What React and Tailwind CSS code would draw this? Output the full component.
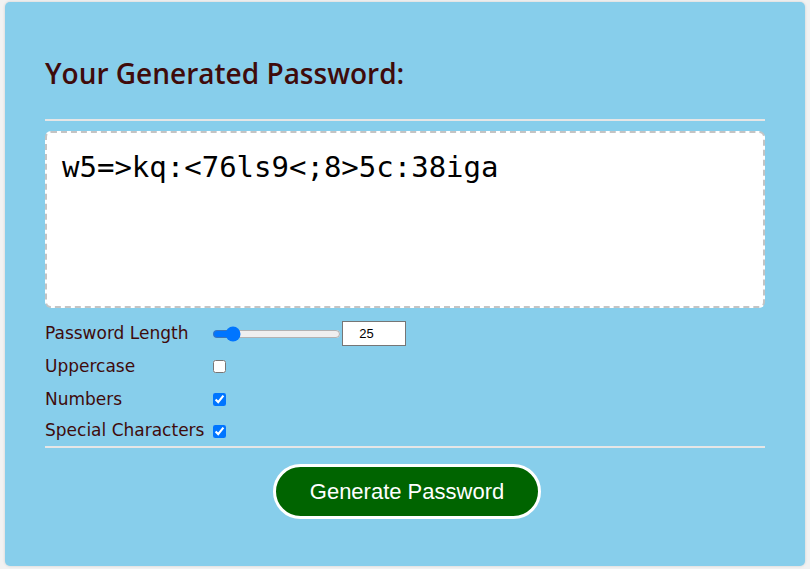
import React from "react";

export default function App() {
  return (
    <div className="min-h-[569px] w-[810px] bg-[#f2f2f2] pt-[2px] pl-[5px]">
      <div className="h-[564px] w-[800px] rounded-[5px] bg-[#87ceeb] px-[40px] shadow-[0_0_3px_rgba(0,0,0,0.15)]">
        <div className="pt-[54px]">
          <h2 className="text-[28px] leading-[34px] font-semibold text-[#3f0b0b] [font-family:'Open_Sans',sans-serif]">
            Your Generated Password:
          </h2>
        </div>
        <div className="mt-[29px] h-[2px] bg-[#e6e6e6]" />
        <div className="mt-[10px] h-[177px] rounded-[6px] border-2 border-dashed border-[#c4c4c4] bg-white px-[15px] pt-[17px]">
          <div className="text-[29px] leading-[34px] text-black [font-family:'DejaVu_Sans_Mono',monospace]">
            w5=&gt;kq:&lt;76ls9&lt;;8&gt;5c:38iga
          </div>
        </div>
        <div className="mt-[9px] text-[17px] text-[#3f0b0b] [font-family:'DejaVu_Sans',sans-serif]">
          <div className="flex h-[33px] items-center">
            <span className="w-[167px]">Password Length</span>
            <input
              type="range"
              min="10"
              max="140"
              defaultValue="25"
              className="m-0 w-[129px] accent-[#0075ff]"
            />
            <input
              type="number"
              defaultValue="25"
              className="ml-[1px] h-[25px] w-[64px] border border-[#767676] bg-white text-center text-[13px] text-black [font-family:'Liberation_Sans',sans-serif]"
            />
          </div>
          <div className="flex h-[33px] items-center">
            <span className="w-[168px]">Uppercase</span>
            <input type="checkbox" className="h-[13px] w-[13px]" />
          </div>
          <div className="flex h-[33px] items-center">
            <span className="w-[168px]">Numbers</span>
            <input type="checkbox" defaultChecked className="h-[13px] w-[13px] accent-[#0075ff]" />
          </div>
          <div className="flex h-[30px] items-center">
            <span className="w-[168px]">Special Characters</span>
            <input type="checkbox" defaultChecked className="h-[13px] w-[13px] accent-[#0075ff]" />
          </div>
        </div>
        <div className="h-[2px] bg-[#e6e6e6]" />
        <div className="mt-[16px] flex justify-center pl-[4px]">
          <button className="h-[55px] w-[268px] rounded-full border-[3px] border-white bg-[#006400] text-[22px] text-white [font-family:'Liberation_Sans',sans-serif]">
            Generate Password
          </button>
        </div>
      </div>
    </div>
  );
}
